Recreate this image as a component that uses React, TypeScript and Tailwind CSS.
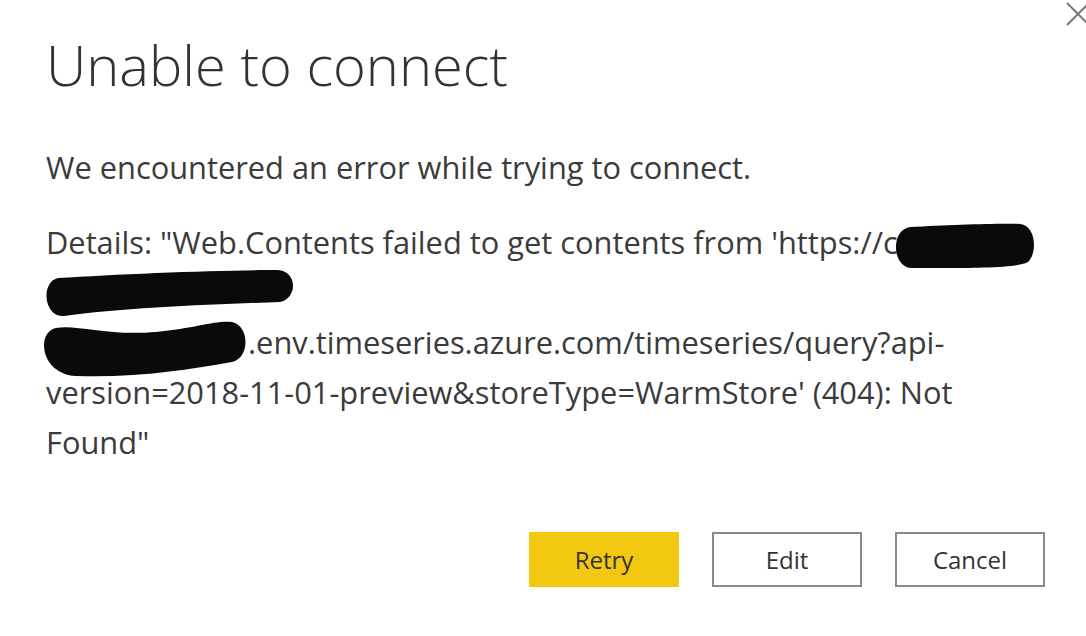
import React from "react";

const font = { fontFamily: '"Open Sans", "Noto Sans", sans-serif' };

function Blob1() {
  return (
    <svg width="146" height="48" viewBox="0 0 146 48" className="shrink-0 mt-[5px] ml-[-8px]">
      <path d="M20 5 C 60 3, 110 1, 130 2 C 147 4, 147 32, 138 40 C 128 47, 60 46, 22 46 C 2 46, 0 8, 20 5 Z" fill="#0a0a0a" />
    </svg>
  );
}

function Blob2() {
  return (
    <svg width="256" height="50" viewBox="0 0 256 50" className="shrink-0 mt-[1px] ml-[-6px]">
      <path d="M18 10 C 80 6, 180 2, 236 2 C 258 2, 258 30, 240 34 C 180 36, 80 40, 24 48 C 4 50, 0 14, 18 10 Z" fill="#0a0a0a" />
    </svg>
  );
}

function Blob3() {
  return (
    <svg width="212" height="62" viewBox="0 0 212 62" className="shrink-0 mt-[1px] ml-[-10px]">
      <path d="M20 10 C 40 6, 70 18, 120 14 C 160 10, 180 2, 196 4 C 214 8, 214 40, 196 44 C 150 52, 100 60, 40 58 C 4 56, 0 14, 20 10 Z" fill="#0a0a0a" />
    </svg>
  );
}

function Line({ children }: { children: React.ReactNode }) {
  return <div className="flex items-start h-[50px] whitespace-nowrap">{children}</div>;
}

export default function App() {
  return (
    <div
      className="relative w-[1086px] h-[636px] bg-white overflow-hidden flex flex-col text-[#3b3b3b]"
      style={font}
    >
      <svg width="30" height="30" viewBox="0 0 30 30" className="absolute left-[1064px] top-0">
        <path d="M3 3 L25 25 M25 3 L3 25" stroke="#7a7a7a" strokeWidth="2" fill="none" />
      </svg>

      <div className="pl-[46px] pt-[34px]">
        <h1 className="text-[56px] leading-[60px] font-light text-[#333333]">Unable to connect</h1>
      </div>

      <div className="pl-[46px] mt-[48px] text-[30.8px] leading-[50px]">
        <p className="whitespace-nowrap">We encountered an error while trying to connect.</p>
        <div className="mt-[25px]">
          <Line>
            <span>Details: "Web.Contents failed to get contents from 'https://c</span>
            <Blob1 />
          </Line>
          <Line>
            <Blob2 />
          </Line>
          <Line>
            <Blob3 />
            <span>.env.timeseries.azure.com/timeseries/query?api-</span>
          </Line>
          <Line>
            <span>version=2018-11-01-preview&amp;storeType=WarmStore' (404): Not</span>
          </Line>
          <Line>
            <span>Found"</span>
          </Line>
        </div>
      </div>

      <div className="mt-auto mb-[49px] flex justify-end gap-[33px] pr-[41px] text-[24px] text-[#333333]">
        <button className="w-[150px] h-[55px] bg-[#f2c811] flex items-center justify-center">Retry</button>
        <button className="w-[150px] h-[55px] border-2 border-[#8a8a8a] bg-white flex items-center justify-center">Edit</button>
        <button className="w-[150px] h-[55px] border-2 border-[#8a8a8a] bg-white flex items-center justify-center">Cancel</button>
      </div>
    </div>
  );
}
